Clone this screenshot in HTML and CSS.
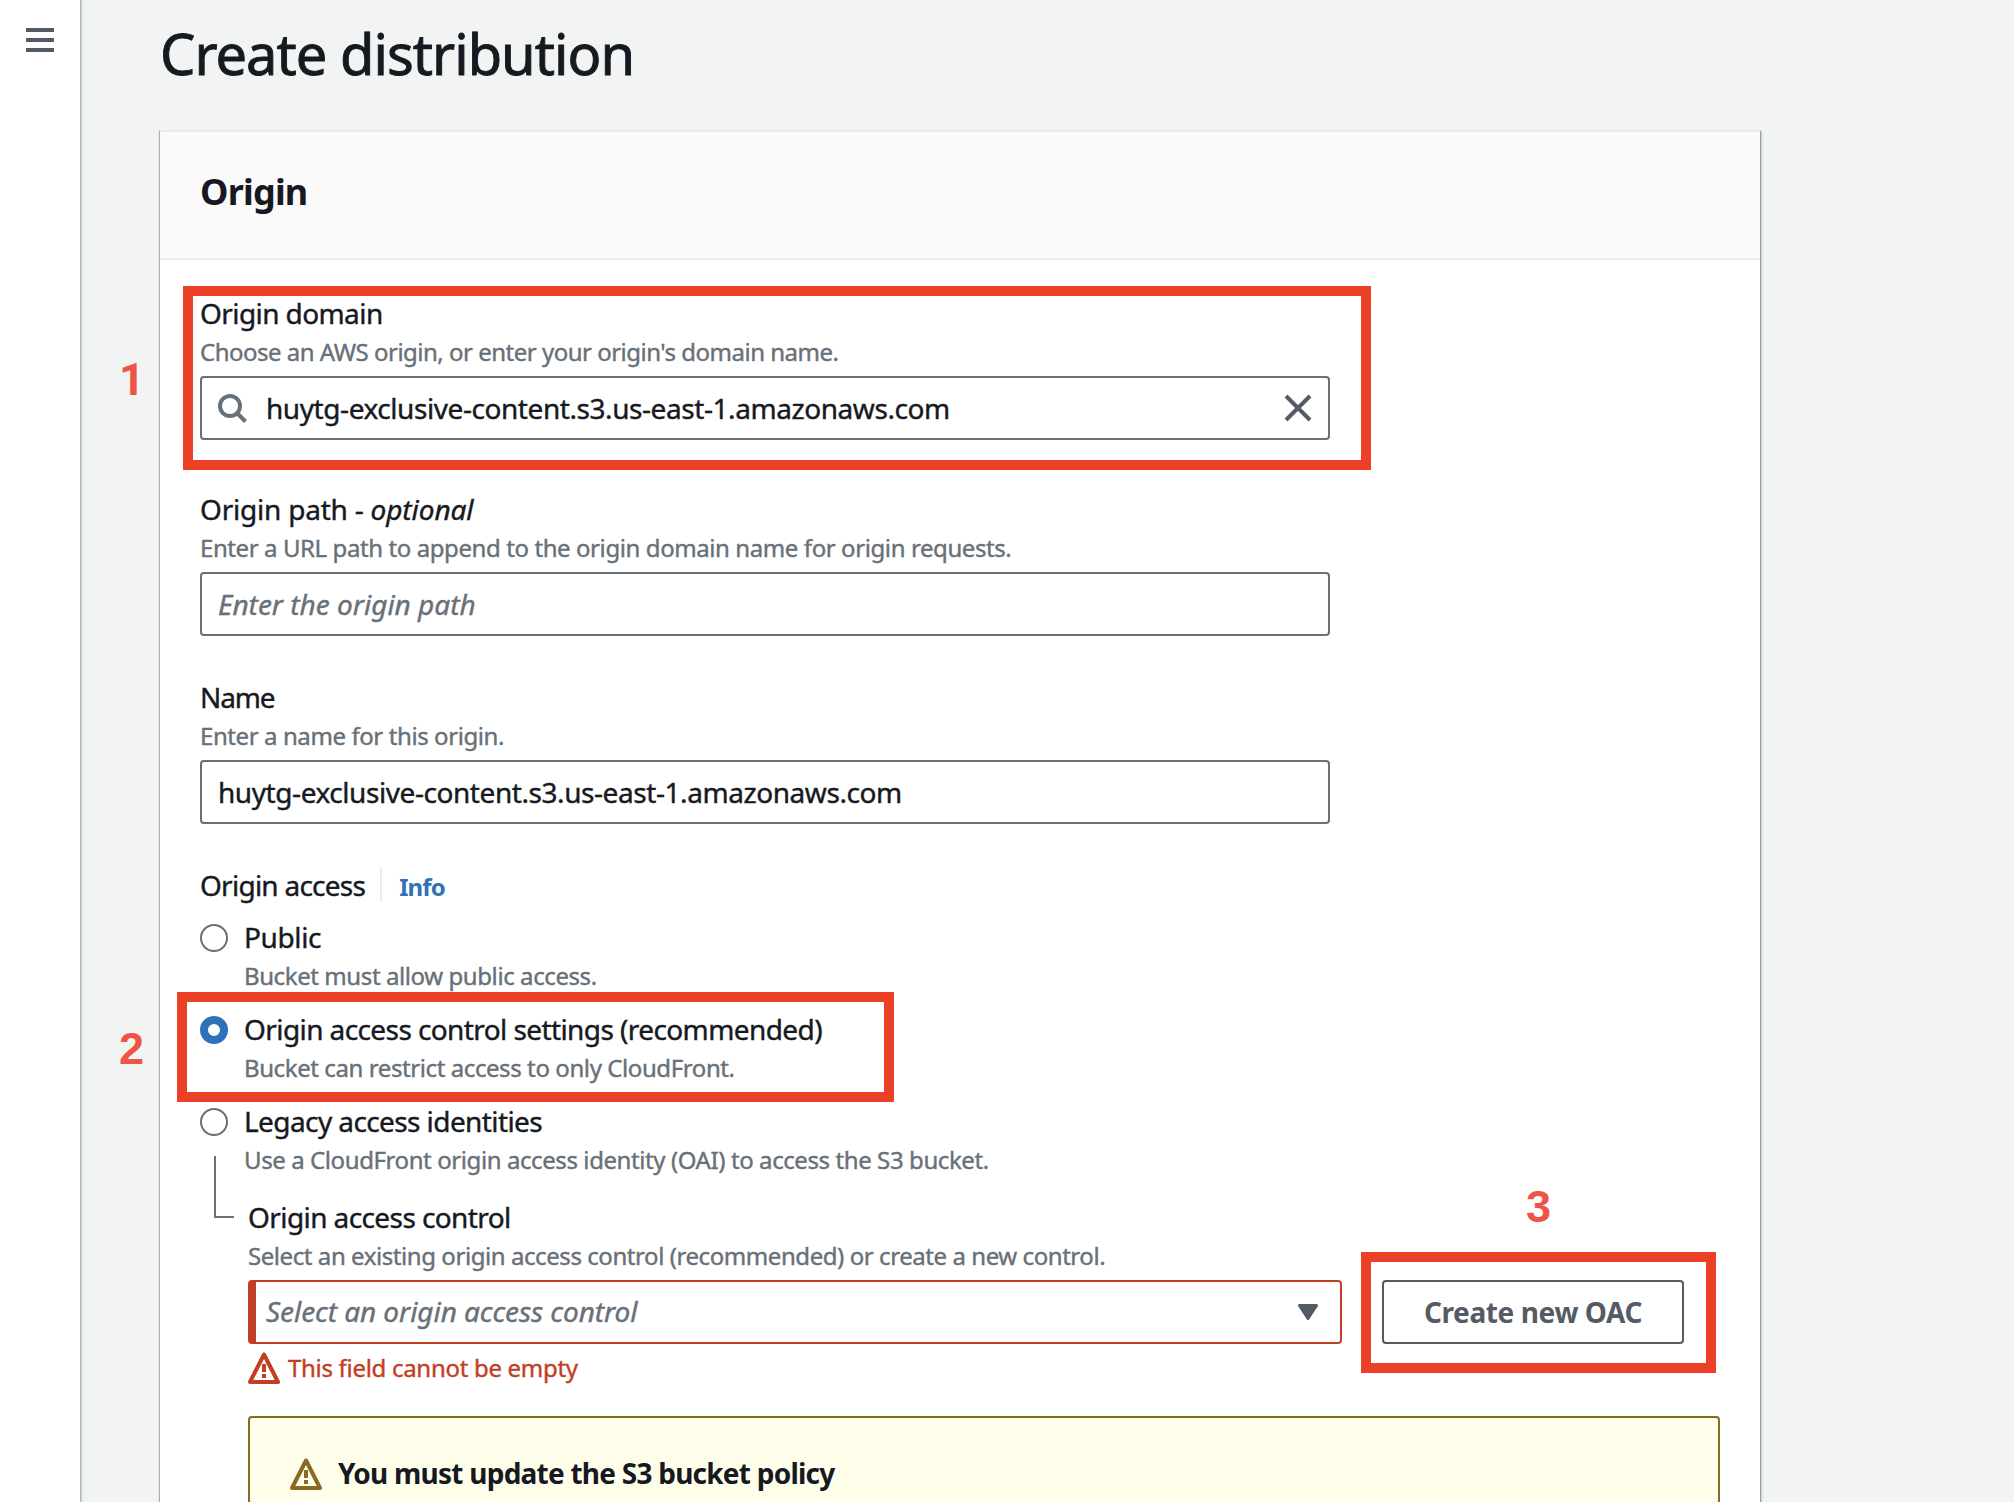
FILE: index.html
```html
<!DOCTYPE html>
<html lang="en">
<head>
<meta charset="utf-8">
<title>Create distribution</title>
<link rel="stylesheet" href="styles.css">
</head>
<body>
<div class="page">
  <nav class="rail">
    <div class="menu"><span></span><span></span><span></span></div>
  </nav>
  <main class="content">
    <h1 class="title">Create distribution</h1>
    <section class="card">
      <header class="card-header"><h2 class="card-title">Origin</h2></header>
      <div class="card-body">
        <div class="field field-domain">
          <div class="label">Origin domain</div>
          <div class="hint hint-domain">Choose an AWS origin, or enter your origin's domain name.</div>
          <div class="input input-search">
            <svg class="search-icon" viewBox="0 0 32 32"><circle cx="13" cy="14" r="10" /><path d="M20 21l8.500 8.500" /></svg>
            <span class="value">huytg-exclusive-content.s3.us-east-1.amazonaws.com</span>
            <svg class="clear-icon" viewBox="0 0 28 28"><path d="M2 2l24 24M26 2L2 26" /></svg>
          </div>
        </div>
        <div class="field">
          <div class="label label-path">Origin path - <em>optional</em></div>
          <div class="hint hint-path">Enter a URL path to append to the origin domain name for origin requests.</div>
          <div class="input"><span class="placeholder ph-path">Enter the origin path</span></div>
        </div>
        <div class="field">
          <div class="label label-name">Name</div>
          <div class="hint">Enter a name for this origin.</div>
          <div class="input"><span class="value">huytg-exclusive-content.s3.us-east-1.amazonaws.com</span></div>
        </div>
        <div class="access">
          <div class="access-head"><span class="label label-access">Origin access</span><a class="info">Info</a></div>
          <div class="options">
            <div class="option">
              <span class="radio"></span>
              <div><div class="label label-public">Public</div><div class="hint">Bucket must allow public access.</div></div>
            </div>
            <div class="option">
              <span class="radio checked"></span>
              <div><div class="label">Origin access control settings (recommended)</div><div class="hint">Bucket can restrict access to only CloudFront.</div></div>
            </div>
            <div class="option">
              <span class="radio"></span>
              <div><div class="label">Legacy access identities</div><div class="hint">Use a CloudFront origin access identity (OAI) to access the S3 bucket.</div></div>
            </div>
          </div>
        </div>
        <div class="nested">
          <span class="branch"></span>
          <div class="label">Origin access control</div>
          <div class="hint hint-select">Select an existing origin access control (recommended) or create a new control.</div>
          <div class="select-row">
            <div class="select">
              <span class="placeholder ph-select">Select an origin access control</span>
              <svg class="caret" viewBox="0 0 20 16"><path d="M1.5 1.5h17L10 14.5z" /></svg>
            </div>
            <button class="button">Create new OAC</button>
          </div>
          <div class="error">
            <svg class="warn" viewBox="0 0 32 32"><path d="M16 2.5L30 30H2z" /><path class="mark" d="M16 12v8M16 22v4" /></svg>
            <span>This field cannot be empty</span>
          </div>
          <div class="alert">
            <svg class="warn" viewBox="0 0 32 32"><path d="M16 2.5L30 30H2z" /><path class="mark" d="M16 12v8M16 22v4" /></svg>
            <strong>You must update the S3 bucket policy</strong>
          </div>
        </div>
      </div>
    </section>
  </main>
  <div class="marker marker-1"></div>
  <div class="marker marker-2"></div>
  <div class="marker marker-3"></div>
  <div class="step step-1">1</div>
  <div class="step step-2">2</div>
  <div class="step step-3">3</div>
</div>
</body>
</html>
```
FILE: styles.css
```css
* { box-sizing: border-box; }
html, body { margin: 0; height: 100%; overflow: hidden; }
body {
  background: #f2f3f3;
  color: #16191f;
  font-family: "Noto Sans", "Open Sans", sans-serif;
  font-size: 28px;
}
.page { position: relative; display: flex; width: 2014px; height: 1502px; overflow: hidden; }
.rail {
  flex: none;
  width: 80px;
  padding: 28px 26px;
  background: #fff;
  box-shadow: 1px 0 1px #aab7b8, 2px 0 2px rgba(0, 28, 36, .15);
}
.menu { display: flex; flex-direction: column; gap: 6px; }
.menu span { height: 4px; background: #545b64; }
.content { flex: none; width: 1680px; padding: 15px 0 0 80px; }
.title { margin: 0 0 39px; font-size: 56px; line-height: 76px; font-weight: 400; letter-spacing: -.97px; white-space: nowrap; -webkit-text-stroke: .9px; }
.card {
  height: 1500px;
  background: #fff;
  border-top: 2px solid #eaeded;
  box-shadow: 1px 1px 1px rgba(0, 28, 36, .3), 2px 1px 2px rgba(0, 28, 36, .12), -1px 1px 1px rgba(0, 28, 36, .3);
}
.card-header { height: 128px; padding: 35px 40px 0; background: #fafafa; border-bottom: 2px solid #eaeded; }
.card-title { margin: 0; font-size: 36px; line-height: 49px; font-weight: 700; letter-spacing: -.8px; }
.card-body { padding: 31px 40px 0; }
.field { width: 1130px; margin-bottom: 39px; }
.field-domain { margin-bottom: 47px; }
.label, .hint, .value, .placeholder, .error span { -webkit-text-stroke: .4px; }
.label { line-height: 44px; letter-spacing: -.59px; white-space: nowrap; }
.label-path { letter-spacing: -.22px; }
.label-path em { letter-spacing: -.08px; }
.label-name { letter-spacing: -1.1px; }
.label-access { letter-spacing: -.75px; }
.label-public { letter-spacing: -.38px; }
.hint { color: #687078; font-size: 24px; line-height: 33px; letter-spacing: -.41px; white-space: nowrap; }
.hint-domain { letter-spacing: -.5px; }
.hint-select { letter-spacing: -.43px; }
.input {
  display: flex;
  align-items: center;
  height: 64px;
  margin-top: 8px;
  padding: 0 16px;
  background: #fff;
  border: 2px solid #687078;
  border-radius: 4px;
}
.input-search { padding-left: 15px; }
.value { letter-spacing: -.43px; line-height: 38px; white-space: nowrap; }
.placeholder { color: #687078; font-style: italic; line-height: 38px; white-space: nowrap; }
.ph-path { letter-spacing: 0; }
.ph-select { letter-spacing: -.06px; margin-top: -2px; }
.search-icon { width: 32px; height: 32px; margin-right: 17px; fill: none; stroke: #687078; stroke-width: 4; }
.clear-icon { width: 28px; height: 28px; margin-left: auto; fill: none; stroke: #545b64; stroke-width: 4; }
.access-head { display: flex; align-items: center; }
.info {
  height: 34px;
  margin-left: 15px;
  padding-left: 17px;
  border-left: 2px solid #eaeded;
  color: #2e73b8;
  font-size: 24px;
  line-height: 37px;
  font-weight: 700;
  letter-spacing: -.9px;
}
.options { display: flex; flex-direction: column; gap: 15px; margin-top: 8px; }
.option { display: flex; gap: 16px; }
.radio { flex: none; width: 28px; height: 28px; margin-top: 9px; border: 2px solid #687078; border-radius: 50%; background: #fff; }
.radio.checked { border: 8px solid #2e73b8; }
.nested { position: relative; width: 1472px; margin: 19px 0 0 48px; }
.branch {
  position: absolute;
  left: -34px;
  top: -39px;
  width: 20px;
  height: 62px;
  border-left: 2px solid #687078;
  border-bottom: 2px solid #687078;
}
.select-row { display: flex; gap: 40px; margin-top: 8px; }
.select {
  display: flex;
  align-items: center;
  justify-content: space-between;
  width: 1094px;
  height: 64px;
  padding: 0 22px 0 10px;
  border: 2px solid #c13f25;
  border-left-width: 8px;
  border-radius: 4px;
}
.caret { width: 20px; height: 16px; fill: #545b64; stroke: #545b64; stroke-width: 3; stroke-linejoin: round; }
.button {
  width: 302px;
  height: 64px;
  padding: 0;
  background: #fff;
  border: 2px solid #545b64;
  border-radius: 4px;
  color: #545b64;
  font: 700 28px/38px "Noto Sans", "Open Sans", sans-serif;
  letter-spacing: -.38px;
  white-space: nowrap;
}
.error { display: flex; gap: 8px; height: 33px; margin-top: 7px; color: #c13f25; font-size: 24px; line-height: 33px; letter-spacing: -.3px; }
.warn { flex: none; width: 32px; height: 32px; margin-top: 1px; fill: none; stroke: currentColor; stroke-width: 4; stroke-linejoin: round; }
.warn .mark { stroke-linecap: butt; }
.alert {
  display: flex;
  gap: 16px;
  height: 200px;
  margin-top: 32px;
  padding: 39px 40px;
  background: #fffeeb;
  border: 2px solid #8a6a20;
  border-radius: 4px;
  color: #8a6a20;
}
.alert strong { color: #16191f; line-height: 38px; letter-spacing: -.76px; margin-top: -3px; }
.marker { position: absolute; border: 10px solid #eb4026; }
.marker-1 { left: 183px; top: 286px; width: 1188px; height: 184px; }
.marker-2 { left: 177px; top: 992px; width: 717px; height: 110px; }
.marker-3 { left: 1361px; top: 1252px; width: 355px; height: 121px; }
.step { position: absolute; color: #ee5546; font: 700 45px/52px "Liberation Sans", sans-serif; }
.step-1 { left: 119px; top: 354px; font-family: Roboto, "Liberation Sans", sans-serif; }
.step-2 { left: 119px; top: 1023px; }
.step-3 { left: 1526px; top: 1181px; }
```
